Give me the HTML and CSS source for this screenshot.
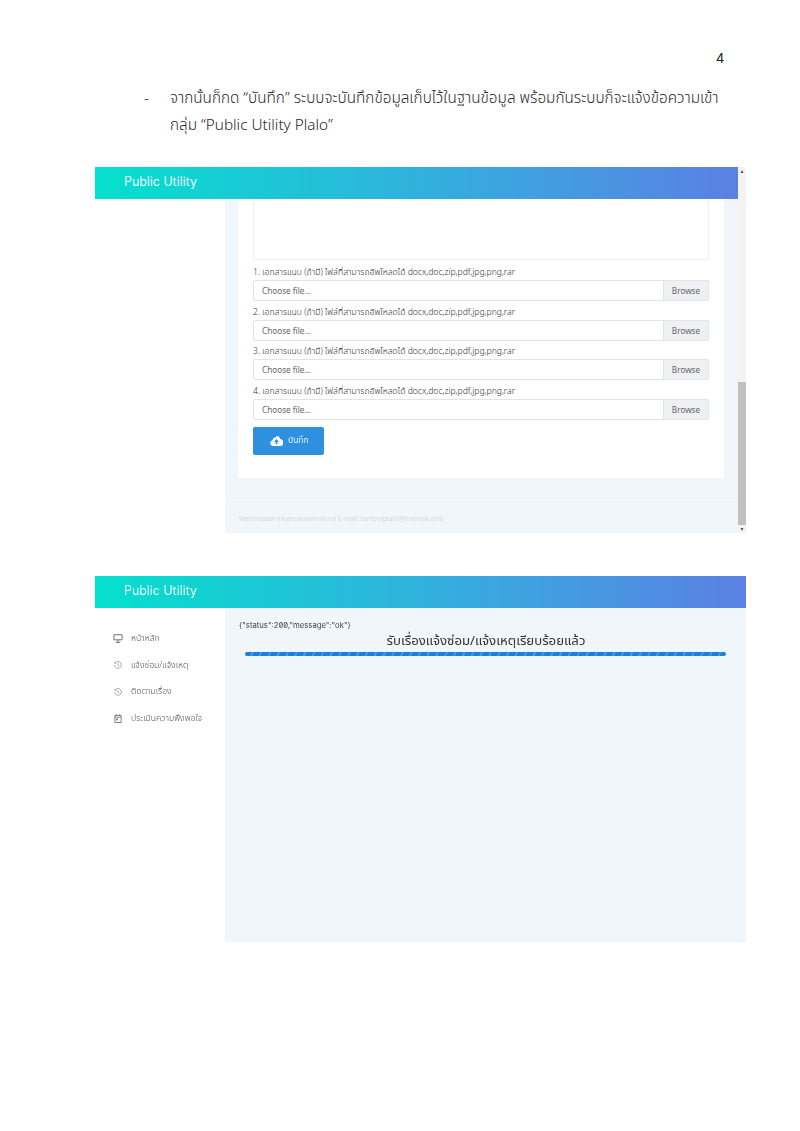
FILE: index.html
```html
<!DOCTYPE html>
<html lang="th">
<head>
  <meta charset="UTF-8" />
  <title>Public Utility</title>
  <link rel="stylesheet" href="styles.css">
</head>
<body>
  <div class="page-no">4</div>
  <div class="intro">
    <span class="dash">-</span>
    <p>จากนั้นก็กด “บันทึก” ระบบจะบันทึกข้อมูลเก็บไว้ในฐานข้อมูล พร้อมกันระบบก็จะแจ้งข้อความเข้า<br>กลุ่ม “Public Utility Plalo”</p>
  </div>

  <section class="shot shot-form">
    <div class="shot-main">
      <header class="topbar">Public Utility</header>
      <div class="shot-body">
        <aside class="sidebar"></aside>
        <main class="content">
          <div class="card">
            <div class="textarea"></div>
            <label>1. เอกสารแนบ (ถ้ามี) ไฟล์ที่สามารถอัพโหลดได้ docx,doc,zip,pdf,jpg,png,rar</label>
            <div class="file-input"><span>Choose file...</span><b>Browse</b></div>
            <label>2. เอกสารแนบ (ถ้ามี) ไฟล์ที่สามารถอัพโหลดได้ docx,doc,zip,pdf,jpg,png,rar</label>
            <div class="file-input"><span>Choose file...</span><b>Browse</b></div>
            <label>3. เอกสารแนบ (ถ้ามี) ไฟล์ที่สามารถอัพโหลดได้ docx,doc,zip,pdf,jpg,png,rar</label>
            <div class="file-input"><span>Choose file...</span><b>Browse</b></div>
            <label>4. เอกสารแนบ (ถ้ามี) ไฟล์ที่สามารถอัพโหลดได้ docx,doc,zip,pdf,jpg,png,rar</label>
            <div class="file-input"><span>Choose file...</span><b>Browse</b></div>
            <button class="save">
              <svg width="13" height="10" viewBox="0 0 14 11"><path fill="#fff" d="M3.200 11A3.200 3.200 0 0 1 2.600 4.700 3.600 3.600 0 0 1 6 1.600c.4-1 1.400-1.600 2.400-1.400 1.600.3 2.400 1.700 2.300 3.200A3.800 3.800 0 0 1 10.800 11z"/><path fill="#3090e0" d="M7 3.200 9.800 6.200H8V9H6V6.200H4.200z"/></svg>
              บันทึก
            </button>
          </div>
          <footer class="foot">Webmaster งานสารสนเทศเทศบาล E-mail: tambolplalo@hotmail.com</footer>
        </main>
      </div>
    </div>
    <div class="scrollbar">
      <span class="arrow">▴</span>
      <span class="thumb"></span>
      <span class="arrow">▾</span>
    </div>
  </section>

  <section class="shot shot-done">
    <div class="shot-main">
      <header class="topbar">Public Utility</header>
      <div class="shot-body">
        <aside class="sidebar">
          <nav class="menu">
            <a><svg width="10" height="9" viewBox="0 0 11 10"><path fill="none" stroke="#666" d="M1 .8h9v5.700H1zM5.500 6.500V9M3 9.300h5"/></svg>หน้าหลัก</a>
            <a><svg class="ico-sm" width="8" height="8" viewBox="0 0 9 9"><path fill="none" stroke="#888" stroke-width=".8" d="M1.300 2.300A3.800 3.800 0 1 1 .7 4.500M.9 1v1.600h1.600M4.500 2.500v2.200l1.400.8"/></svg>แจ้งซ่อม/แจ้งเหตุ</a>
            <a><svg class="ico-sm" width="8" height="8" viewBox="0 0 9 9"><path fill="none" stroke="#888" stroke-width=".8" d="M1.300 2.300A3.800 3.800 0 1 1 .7 4.500M.9 1v1.600h1.600M4.500 2.500v2.200l1.400.8"/></svg>ติดตามเรื่อง</a>
            <a><svg class="ico-sm" width="8" height="9" viewBox="0 0 9 10"><path fill="none" stroke="#777" d="M1 1.500h7v8H1zM1 3.500h7"/><path fill="#777" d="M2 .2h1v2H2zM6 .2h1v2H6zM2.500 5h2v2h-2z"/></svg>ประเมินความพึงพอใจ</a>
          </nav>
        </aside>
        <main class="content">
          <div class="json">{"status":200,"message":"ok"}</div>
          <h2>รับเรื่องแจ้งซ่อม/แจ้งเหตุเรียบร้อยแล้ว</h2>
          <div class="progress"></div>
        </main>
      </div>
    </div>
  </section>
</body>
</html>
```

FILE: styles.css
```css
* {
  box-sizing: border-box;
  margin: 0;
  padding: 0;
}

body {
  width: 800px;
  height: 1131px;
  background: #fff;
  color: #222;
  font-family: "Noto Sans", "Noto Sans Thai", "DejaVu Sans", sans-serif;
  overflow: hidden;
  padding-top: 50px;
}

.page-no {
  height: 16px;
  line-height: 16px;
  padding-right: 76px;
  text-align: right;
  font-family: "Liberation Sans", sans-serif;
  font-size: 14px;
}

.intro {
  display: flex;
  margin: 18px 0 0 144px;
  font-size: 15.3px;
  font-weight: 350;
  line-height: 27px;
  color: #2a2a2a;
}

.dash {
  width: 26px;
}

.intro p {
  white-space: nowrap;
}

/* the two pasted screenshots are soft in the source */
.shot {
  display: flex;
  width: 651px;
  height: 366px;
  margin-left: 95px;
  overflow: hidden;
  filter: blur(0.35px);
}

.shot-form {
  margin-top: 29px;
}

.shot-done {
  margin-top: 43px;
}

.shot-main {
  flex: 1;
  display: flex;
  flex-direction: column;
}

.topbar {
  height: 32px;
  flex: none;
  padding-left: 29px;
  background: linear-gradient(90deg, #05e0cc 0%, #2cb6dc 45%, #5b80e4 100%);
  color: #e6fbfa;
  font-family: "Inter", sans-serif;
  font-size: 12.4px;
  line-height: 29px;
}

.shot-body {
  flex: 1;
  display: flex;
  min-height: 0;
}

.sidebar {
  width: 130px;
  flex: none;
  background: #fff;
}

.content {
  flex: 1;
  display: flex;
  flex-direction: column;
  background: #f1f6fa;
}

.card {
  height: 279px;
  margin: 0 14px 0 13px;
  padding: 0 15px;
  background: #fff;
}

.textarea {
  height: 61px;
  margin-bottom: 6px;
  border: 1px solid #eef0f2;
  border-top: 0;
}

.card label {
  display: block;
  height: 14px;
  line-height: 12px;
  font-size: 8.6px;
  font-weight: 300;
  color: #333;
  white-space: nowrap;
}

.file-input {
  display: flex;
  height: 21px;
  margin-bottom: 4.6px;
  border: 1px solid #e2e5e8;
  border-radius: 2px;
  font-size: 8.2px;
  line-height: 19px;
  color: #666;
}

.file-input span {
  flex: 1;
  padding-left: 8px;
}

.file-input b {
  width: 45px;
  background: #eef0f2;
  border-left: 1px solid #e2e5e8;
  font-weight: 400;
  text-align: center;
}

.save {
  display: flex;
  align-items: center;
  gap: 5px;
  width: 71px;
  height: 28px;
  margin-top: 7px;
  padding-left: 17px;
  border: none;
  border-radius: 2px;
  background: #3090e0;
  color: #e8f3fc;
  font-family: inherit;
  font-size: 8.5px;
}

.foot {
  margin-top: 24px;
  padding: 11px 0 0 14px;
  border-top: 1px solid #f6f0f3;
  font-size: 6.7px;
  color: #d0d6dc;
  white-space: nowrap;
}

.scrollbar {
  width: 8px;
  flex: none;
  display: flex;
  flex-direction: column;
  background: #f3f3f3;
  color: #555;
  font-size: 6px;
  line-height: 8px;
  text-align: center;
}

.arrow {
  height: 8px;
  flex: none;
}

.thumb {
  height: 143px;
  margin-top: auto;
  background: #c0c0c0;
}

.menu {
  display: flex;
  flex-direction: column;
  gap: 13.5px;
  padding: 24px 0 0 18px;
}

.menu a {
  display: grid;
  grid-template-columns: 18px 1fr;
  align-items: center;
  height: 13px;
  font-size: 8.6px;
  font-weight: 300;
  color: #555;
  white-space: nowrap;
}

.menu .ico-sm {
  margin-left: 1px;
}

.shot-done .content {
  padding: 13px 20px 0 14px;
}

.json {
  height: 9px;
  line-height: 9px;
  font-family: "Inter", sans-serif;
  font-feature-settings: "zero";
  font-size: 7.7px;
  color: #444;
}

.shot-done h2 {
  margin-top: 3px;
  padding-left: 7px;
  text-align: center;
  font-size: 13.2px;
  font-weight: 400;
  line-height: 14px;
  color: #333;
}

.progress {
  height: 4px;
  margin: 5px 0 0 6px;
  border-radius: 2px;
  background: repeating-linear-gradient(115deg, #1a80dc 0 6px, #3f9ae6 6px 8px);
}
```
